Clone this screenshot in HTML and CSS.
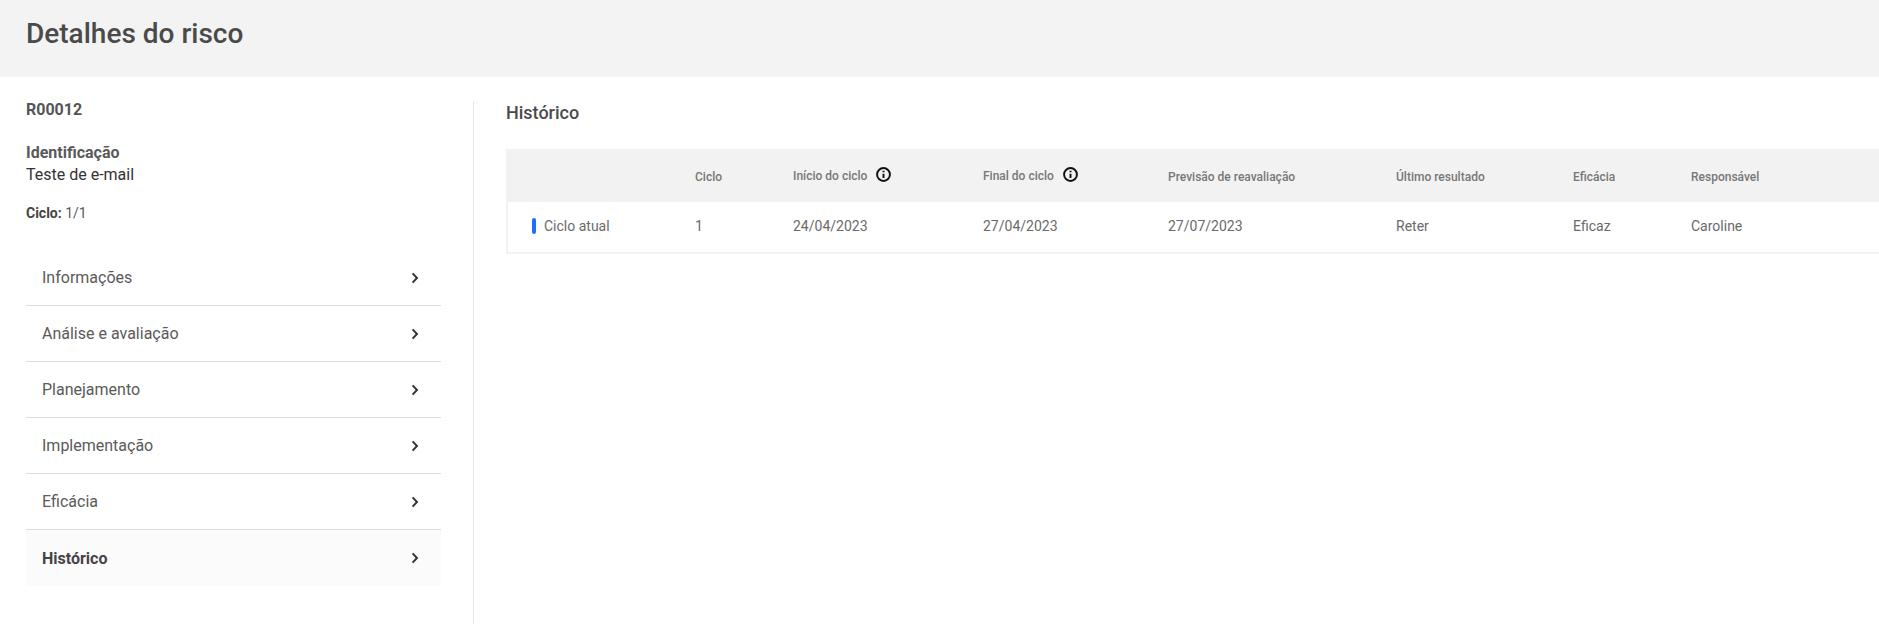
FILE: index.html
```html
<!DOCTYPE html>
<html lang="pt-BR">
<head>
<meta charset="utf-8">
<title>Detalhes do risco</title>
<link rel="stylesheet" href="styles.css">
</head>
<body>
<header class="page-header"><h1 class="page-title">Detalhes do risco</h1></header>
<div class="layout">
  <aside class="sidebar">
    <div class="risk-code">R00012</div>
    <div class="risk-label">Identificação</div>
    <div class="risk-name">Teste de e-mail</div>
    <div class="risk-cycle"><b>Ciclo:</b> 1/1</div>
    <nav class="menu">
      <a class="menu-item">Informações<svg class="chev" viewBox="0 0 8 12"><path d="M1.6 1.4 6 6l-4.4 4.6"/></svg></a>
      <a class="menu-item">Análise e avaliação<svg class="chev" viewBox="0 0 8 12"><path d="M1.6 1.4 6 6l-4.4 4.6"/></svg></a>
      <a class="menu-item">Planejamento<svg class="chev" viewBox="0 0 8 12"><path d="M1.6 1.4 6 6l-4.4 4.6"/></svg></a>
      <a class="menu-item">Implementação<svg class="chev" viewBox="0 0 8 12"><path d="M1.6 1.4 6 6l-4.4 4.6"/></svg></a>
      <a class="menu-item">Eficácia<svg class="chev" viewBox="0 0 8 12"><path d="M1.6 1.4 6 6l-4.4 4.6"/></svg></a>
      <a class="menu-item active">Histórico<svg class="chev" viewBox="0 0 8 12"><path d="M1.6 1.4 6 6l-4.4 4.6"/></svg></a>
    </nav>
  </aside>
  <main class="content">
    <h2 class="section-title">Histórico</h2>
    <div class="table">
      <div class="row head">
        <div></div>
        <div>Ciclo</div>
        <div class="with-info">Início do ciclo<svg class="info" viewBox="0 0 14 14"><circle cx="7" cy="7" r="6"/><path d="M7 6.2v4M7 3.4v1.4"/></svg></div>
        <div class="with-info">Final do ciclo<svg class="info" viewBox="0 0 14 14"><circle cx="7" cy="7" r="6"/><path d="M7 6.2v4M7 3.4v1.4"/></svg></div>
        <div>Previsão de reavaliação</div>
        <div>Último resultado</div>
        <div>Eficácia</div>
        <div>Responsável</div>
      </div>
      <div class="row body">
        <div class="current"><span class="mark"></span>Ciclo atual</div>
        <div>1</div>
        <div>24/04/2023</div>
        <div>27/04/2023</div>
        <div>27/07/2023</div>
        <div>Reter</div>
        <div>Eficaz</div>
        <div>Caroline</div>
      </div>
    </div>
  </main>
</div>
</body>
</html>
```

FILE: styles.css
```css
* { box-sizing: border-box; }
html, body { margin: 0; height: 100%; overflow: hidden; }
body { font-family: Roboto, "Liberation Sans", sans-serif; color: #444; background: #fff; }
.page-header { height: 77px; background: #f3f3f3; padding: 17px 26px 0; }
.page-title { margin: 0; font-size: 28px; line-height: 33px; font-weight: 500; color: #4a4a4a; }
.layout { display: flex; height: 547px; padding-top: 24px; }
.sidebar { width: 474px; flex: none; padding: 0 33px 0 26px; border-right: 1px solid #e6e6e6; }
.risk-code { margin-top: -1px; font-size: 16px; line-height: 19px; font-weight: 700; color: #555; }
.risk-label { margin-top: 24px; font-size: 16px; line-height: 19px; font-weight: 700; color: #5a5a5a; }
.risk-name { margin-top: 3px; font-size: 16px; line-height: 19px; color: #333; }
.risk-cycle { margin-top: 21px; font-size: 14px; line-height: 16px; color: #5a5a5a; }
.risk-cycle b { color: #444; }
.menu { margin-top: 29px; width: 415px; }
.menu-item { display: flex; align-items: center; justify-content: space-between; height: 56px; padding: 0 22px 0 16px; font-size: 16px; color: #5a5a5a; border-bottom: 1px solid #dcdcdc; }
.menu-item:last-child { border-bottom: 0; }
.menu-item.active { background: #fbfbfb; font-weight: 700; color: #444; }
.chev { width: 8px; height: 12px; fill: none; stroke: #333; stroke-width: 2; }
.content { flex: 1; min-width: 0; padding: 0 0 0 32px; }
.section-title { margin: 0; height: 24px; font-size: 18px; line-height: 24px; font-weight: 500; color: #4a4a4a; }
.table { margin-top: 24px; border: 2px solid #f2f2f2; border-right: 0; }
.row { display: grid; grid-template-columns: 187px 98px 190px 185px 228px 177px 118px 1fr; align-items: center; }
.head { height: 51px; background: #f2f2f2; font-size: 12px; font-weight: 500; color: #777; }
.body { height: 50px; padding-bottom: 2px; font-size: 14px; color: #6a6a6a; }
.with-info { display: flex; align-items: center; gap: 9px; margin-top: -2px; }
.info { width: 15px; height: 15px; fill: none; stroke: #111; stroke-width: 1.8; margin-top: -2px; }
.current { display: flex; align-items: center; padding-left: 24px; }
.mark { width: 4px; height: 16px; border-radius: 2px; background: #1f6fff; margin-right: 8px; }
```
